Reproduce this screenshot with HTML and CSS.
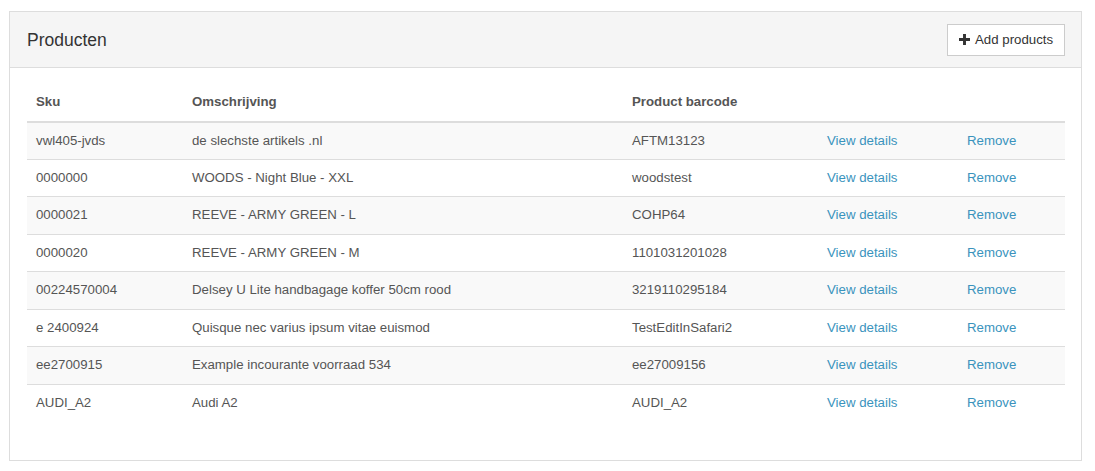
FILE: index.html
```html
<!DOCTYPE html>
<html>
<head>
<meta charset="utf-8">
<link rel="stylesheet" href="styles.css">
</head>
<body>
<div class="panel">
  <div class="panel-heading">
    <h3 class="panel-title">Producten</h3>
    <button class="btn"><svg class="icon" width="11" height="11" viewBox="0 0 12 12"><path d="M4.4 0h3.2v4.4H12v3.2H7.6V12H4.4V7.6H0V4.4h4.4z" fill="#333"/></svg>Add products</button>
  </div>
  <div class="panel-body">
    <table class="table">
      <thead>
        <tr><th class="c1">Sku</th><th class="c2">Omschrijving</th><th class="c3">Product barcode</th><th class="c4"></th><th class="c5"></th></tr>
      </thead>
      <tbody>
        <tr><td>vwl405-jvds</td><td>de slechste artikels .nl</td><td>AFTM13123</td><td><a href="#">View details</a></td><td><a href="#">Remove</a></td></tr>
        <tr><td>0000000</td><td>WOODS - Night Blue - XXL</td><td>woodstest</td><td><a href="#">View details</a></td><td><a href="#">Remove</a></td></tr>
        <tr><td>0000021</td><td>REEVE - ARMY GREEN - L</td><td>COHP64</td><td><a href="#">View details</a></td><td><a href="#">Remove</a></td></tr>
        <tr><td>0000020</td><td>REEVE - ARMY GREEN - M</td><td>1101031201028</td><td><a href="#">View details</a></td><td><a href="#">Remove</a></td></tr>
        <tr><td>00224570004</td><td>Delsey U Lite handbagage koffer 50cm rood</td><td>3219110295184</td><td><a href="#">View details</a></td><td><a href="#">Remove</a></td></tr>
        <tr><td>e 2400924</td><td>Quisque nec varius ipsum vitae euismod</td><td>TestEditInSafari2</td><td><a href="#">View details</a></td><td><a href="#">Remove</a></td></tr>
        <tr><td>ee2700915</td><td>Example incourante voorraad 534</td><td>ee27009156</td><td><a href="#">View details</a></td><td><a href="#">Remove</a></td></tr>
        <tr><td>AUDI_A2</td><td>Audi A2</td><td>AUDI_A2</td><td><a href="#">View details</a></td><td><a href="#">Remove</a></td></tr>
      </tbody>
    </table>
  </div>
</div>
</body>
</html>
```
FILE: styles.css
```css
* { box-sizing: border-box; }
body {
  margin: 0;
  padding: 11px 13px 0 9px;
  font-family: "Liberation Sans", Arial, sans-serif;
  font-size: 13.25px;
  line-height: 20px;
  color: #555;
  background: #fff;
}
.panel {
  border: 1px solid #ddd;
  background: #fff;
  height: 450px;
}
.panel-heading {
  display: flex;
  align-items: center;
  justify-content: space-between;
  background: #f5f5f5;
  border-bottom: 1px solid #ddd;
  padding: 0 16px 0 17px;
  height: 56px;
}
.panel-title {
  margin: 0;
  font-size: 17.5px;
  font-weight: normal;
  color: #333;
}
.btn {
  display: flex;
  align-items: center;
  height: 32px;
  width: 118px;
  padding: 0 0 0 11px;
  background: #fff;
  border: 1px solid #ccc;
  border-radius: 0;
  font-family: "Liberation Sans", Arial, sans-serif;
  font-size: 13.25px;
  color: #333;
}
.icon { margin-right: 5px; }
.panel-body {
  padding: 16px 16px 0 17px;
}
.table {
  width: 100%;
  border-collapse: collapse;
}
.table th {
  text-align: left;
  font-weight: bold;
  color: #555;
  padding: 8px 8px 8px 9px;
  border-bottom: 2px solid #ddd;
  line-height: 20.5px;
}
.table td {
  padding: 8px 8px 8px 9px;
  border-top: 1px solid #ddd;
  line-height: 20.43px;
}
.table tbody tr:first-child td { border-top: 0; }
.table tbody tr:nth-child(odd) { background: #f9f9f9; }
.c1 { width: 156px; }
.c2 { width: 440px; }
.c3 { width: 195px; }
.c4 { width: 140px; }
a { color: #3a93bd; text-decoration: none; }
```
